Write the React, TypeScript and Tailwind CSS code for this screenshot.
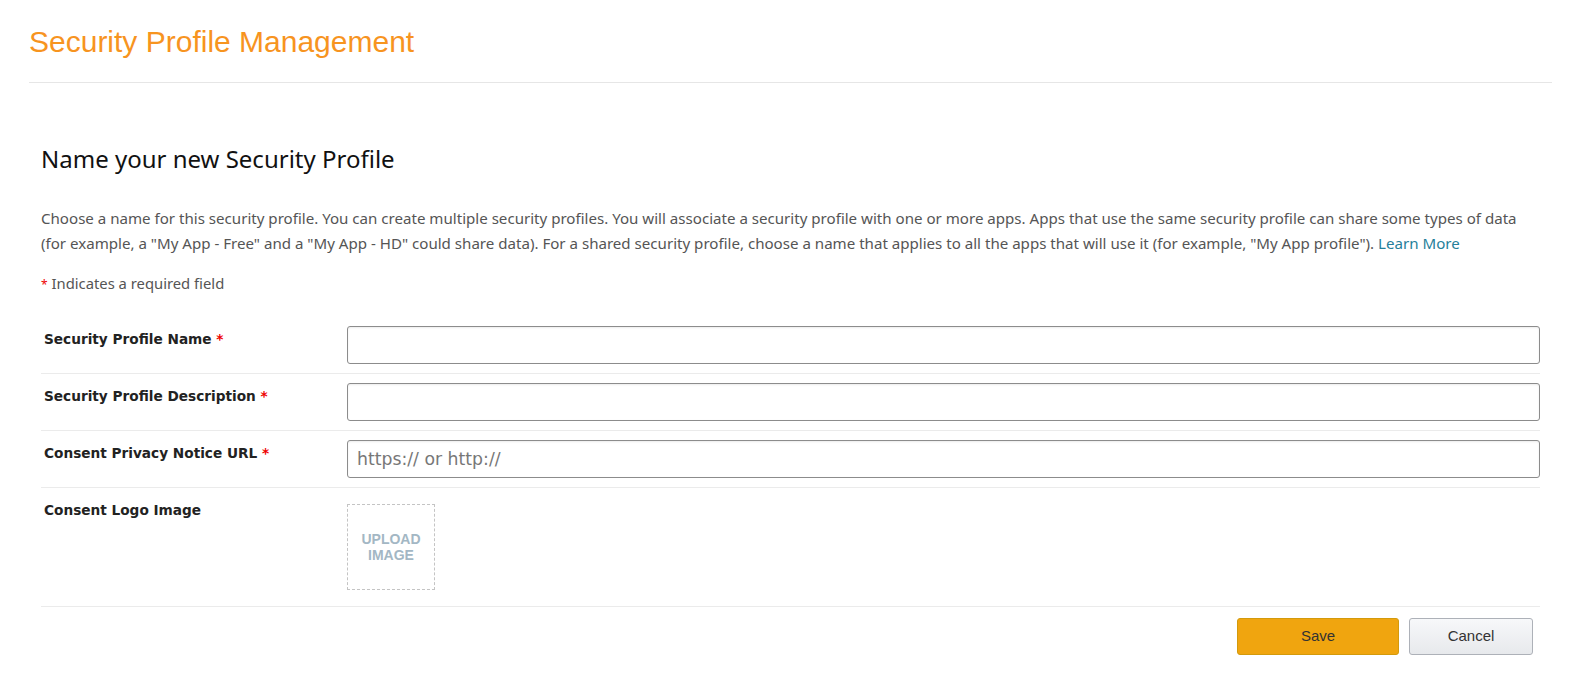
const BODY = "font-['Noto_Sans',sans-serif]";
const LABEL = "font-['DejaVu_Sans',Verdana,sans-serif]";
const ARIAL = "font-['Liberation_Sans',Arial,sans-serif]";

type Field = { label: string; required: boolean; placeholder?: string };

const FIELDS: Field[] = [
  { label: 'Security Profile Name', required: true },
  { label: 'Security Profile Description', required: true },
  { label: 'Consent Privacy Notice URL', required: true, placeholder: 'https:// or http://' },
];

function FieldLabel({ label, required }: { label: string; required: boolean }) {
  return (
    <div className={`w-[306px] shrink-0 pl-[3px] pt-[3px] ${LABEL} text-[13.66px] font-bold leading-5 text-[#222]`}>
      {label}
      {required && <span className="text-[#ee0000]"> *</span>}
    </div>
  );
}

export default function App() {
  return (
    <div className="min-h-screen bg-white pl-[29px] pr-[26px] pt-[25px]">
      <h1 className={`${ARIAL} text-[30px] leading-[34px] text-[#f7941f]`}>Security Profile Management</h1>
      <div className="mt-[23px] h-px bg-[#e6e6e6]" />

      <div className="px-3">
        <h2 className={`${BODY} mt-[60px] text-[24px] leading-8 text-[#111]`}>Name your new Security Profile</h2>

        <div className={`${BODY} mt-[31px] text-[15.1px] leading-[25px] text-[#555]`}>
          Choose a name for this security profile. You can create multiple security profiles. You will associate a
          security profile with one or more apps. Apps that use the same security profile can share some types of data
          (for example, a "My App - Free" and a "My App - HD" could share data). For a shared security profile, choose a
          name that applies to all the apps that will use it (for example, "My App profile"). <span className="text-[#25809a]">Learn More</span>
        </div>

        <p className={`${BODY} mt-[15px] text-[14.8px] leading-[25px] text-[#555]`}>
          <span className="text-[12px] text-[#e00]">*</span> Indicates a required field
        </p>

        <div className="mt-[20px]">
          {FIELDS.map((f) => (
            <div key={f.label} className="flex border-b border-[#ebebeb] py-[9px]">
              <FieldLabel label={f.label} required={f.required} />
              <input
                type="text"
                placeholder={f.placeholder}
                className={`h-[38px] flex-1 rounded-[3px] border border-[#8c8c8c] px-[9px] ${LABEL} text-[17.3px] text-[#333] shadow-[inset_0_1px_2px_rgba(0,0,0,0.08)] outline-none placeholder:text-[#777]`}
              />
            </div>
          ))}

          <div className="flex border-b border-[#ebebeb] py-[9px]">
            <FieldLabel label="Consent Logo Image" required={false} />
            <div className="my-[7px] flex h-[86px] w-[88px] items-center justify-center border border-dashed border-[#c4c4c4] text-center">
              <span className={`${ARIAL} text-[14px] font-bold leading-4 text-[#a3b7c4]`}>
                UPLOAD
                <br />
                IMAGE
              </span>
            </div>
          </div>
        </div>

        <div className="flex justify-end gap-[10px] pr-[7px] pt-[11px]">
          <button
            className={`h-[37px] w-[162px] rounded-[3px] border border-[#d39a0c] bg-[#f0a50f] ${ARIAL} text-[15px] text-[#333]`}
          >
            Save
          </button>
          <button
            className={`h-[37px] w-[124px] rounded-[3px] border border-[#adb1b8] bg-gradient-to-b from-[#f7f8fa] to-[#e7e9ec] ${ARIAL} text-[15px] text-[#333]`}
          >
            Cancel
          </button>
        </div>
      </div>
    </div>
  );
}
